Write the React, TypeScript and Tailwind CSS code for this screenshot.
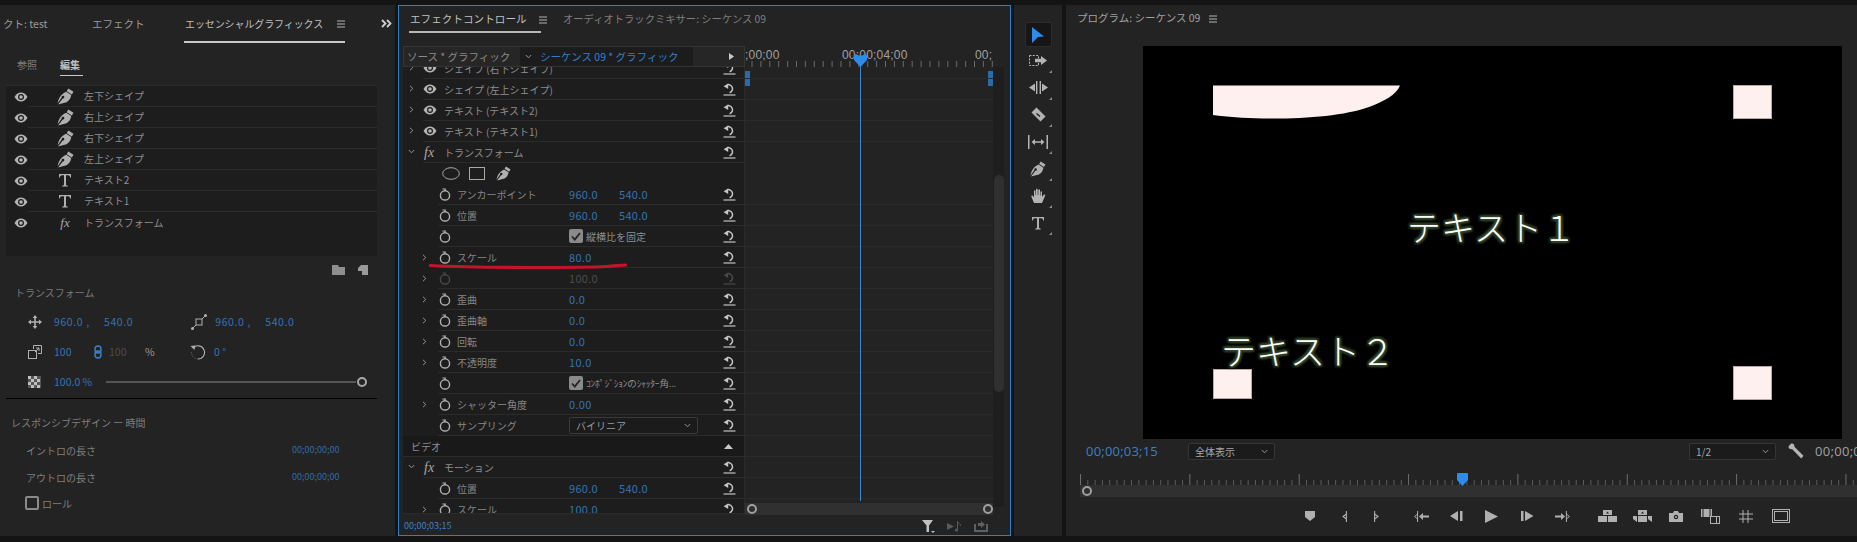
import React from "react";

const FONT = { fontFamily: '"Noto Sans CJK JP", "Noto Sans", sans-serif' };

function Eye({ c = "#b4b4b4" }: { c?: string }) {
  return (
    <svg width="14" height="10" viewBox="0 0 14 10" className="shrink-0">
      <path d="M0.5 5C2.5 1.8 4.6 0.6 7 0.6S11.5 1.8 13.5 5C11.5 8.2 9.4 9.4 7 9.4S2.5 8.2 0.5 5Z" fill={c} />
      <circle cx="7" cy="5" r="3" fill="#1d1d1d" />
      <circle cx="7" cy="5" r="1.8" fill={c} />
    </svg>
  );
}

function Pen({ size = 16, c = "#b0b0b0" }: { size?: number; c?: string }) {
  return (
    <svg width={size} height={size} viewBox="0 0 16 16" className="shrink-0">
      <path d="M10.6 0.5L15.5 3.6L14 6L9.2 3Z" fill={c} />
      <path d="M8.6 3.6L13.4 6.7C13 9.6 11.5 12 9 13.4L1 15.5L5.4 9.8A1.3 1.3 0 1 0 4.4 9L0.6 14.4C1.2 10.5 3.4 5.8 8.6 3.6Z" fill={c} />
    </svg>
  );
}

function TIcon({ c = "#b0b0b0" }: { c?: string }) {
  return (
    <svg width="14" height="14" viewBox="0 0 14 14" className="shrink-0">
      <path d="M1 1H13V4.4H12.2C12 3 11.4 2.2 10 2.2H8V11.6C8 12.4 8.6 12.7 9.8 12.7V13.5H4.2V12.7C5.4 12.7 6 12.4 6 11.6V2.2H4C2.6 2.2 2 3 1.8 4.4H1Z" fill={c} />
    </svg>
  );
}

function Fx({ c = "#a8a8a8", size = 13 }: { c?: string; size?: number }) {
  return (
    <span className="italic leading-none" style={{ color: c, fontSize: size, fontFamily: '"Liberation Serif", serif' }}>
      fx
    </span>
  );
}

function Stopwatch({ c = "#b0b0b0" }: { c?: string }) {
  return (
    <svg width="12" height="13" viewBox="0 0 12 13" className="shrink-0" fill="none">
      <circle cx="6" cy="7.4" r="4.6" stroke={c} strokeWidth="1.4" />
      <path d="M3.4 1H7M6 3L6 1.2" stroke={c} strokeWidth="1.2" />
    </svg>
  );
}

function Reset({ c = "#c4c4c4" }: { c?: string }) {
  return (
    <svg width="13" height="13" viewBox="0 0 13 13" className="shrink-0" fill="none">
      <path d="M4 1.8A4.2 4.2 0 1 1 6.6 9.8" stroke={c} strokeWidth="1.5" />
      <path d="M5.2 0.4V6L0.6 3.2Z" fill={c} />
      <path d="M0.5 12H12.5" stroke={c} strokeWidth="1.2" />
    </svg>
  );
}

function Chevron({ down = false }: { down?: boolean }) {
  return (
    <svg width="7" height="7" viewBox="0 0 7 7" fill="none" className="shrink-0">
      <path d={down ? "M0.8 2L3.5 4.8L6.2 2" : "M2 0.8L4.8 3.5L2 6.2"} stroke="#a0a0a0" strokeWidth="0.9" />
    </svg>
  );
}

function Burger() {
  return (
    <svg width="8" height="8" viewBox="0 0 8 8" className="shrink-0">
      <path d="M0 1H8M0 4H8M0 7H8" stroke="#b4b4b4" strokeWidth="1" />
    </svg>
  );
}

const layers = [
  ["pen", "左下シェイプ"],
  ["pen", "右上シェイプ"],
  ["pen", "右下シェイプ"],
  ["pen", "左上シェイプ"],
  ["t", "テキスト2"],
  ["t", "テキスト1"],
  ["fx", "トランスフォーム"],
];

function LeftPanel() {
  return (
    <div className="w-[395px] h-full bg-[#232323] shrink-0 flex flex-col text-[10px] text-[#9a9a9a]">
      <div className="h-[38px] flex items-start pt-[11px] text-[10.5px] leading-[16px] relative">
        <span className="ml-[3px] w-[89px]">クト: test</span>
        <span className="w-[92px]">エフェクト</span>
        <div className="w-[161px] h-[27px] border-b-2 border-[#c8c8c8] flex items-start pl-[1px] gap-[14px] text-[#c0c0c0] whitespace-nowrap tracking-[-0.1px]">
          <span className="text-[10px]">エッセンシャルグラフィックス</span>
          <span className="pt-[4px]"><Burger /></span>
        </div>
        <svg width="11" height="9" viewBox="0 0 11 9" className="ml-[36px] mt-[3px]" fill="none">
          <path d="M1 1L4.5 4.5L1 8M6 1L9.5 4.5L6 8" stroke="#d0d0d0" strokeWidth="1.8" />
        </svg>
      </div>
      <div className="h-[42px] flex items-start pt-[14px] pl-[17px] gap-[23px]">
        <span className="text-[#808080]">参照</span>
        <span className="h-[19px] w-[23px] border-b border-[#c8c8c8] text-[#c0c0c0] font-bold">編集</span>
      </div>
      <div className="mx-[6px] w-[371px] h-[171px] bg-[#1d1d1d] border-t border-[#2b2b2b]">
        {layers.map(([k, t], i) => (
          <div key={t} className="h-[21px] flex items-center">
            <div className="w-[22px] flex justify-end shrink-0">
              <Eye />
            </div>
            <div className={`flex-1 h-full flex items-center ${i < 6 ? "border-b border-[#2b2b2b]" : ""}`}>
              <div className="w-[40px] flex justify-center shrink-0 ml-[17px]">
                {k === "pen" ? <Pen size={17} /> : k === "t" ? <TIcon /> : <Fx />}
              </div>
              <span className="text-[#8e8e8e] ml-[-1px] -mt-[1px]">{t}</span>
            </div>
          </div>
        ))}
      </div>
      <div className="h-[22px] flex items-center justify-end pr-[26px] gap-[13px] w-[394px] pt-[6px]">
        <svg width="13" height="10" viewBox="0 0 13 10"><path d="M0 0H6L7 2H13V10H0Z" fill="#8e8e8e" /></svg>
        <svg width="10" height="10" viewBox="0 0 10 10"><path d="M3 0H10V10H4V6H0V3Z" fill="#9a9a9a" /></svg>
      </div>
      <div className="pl-[15px] mt-[7px] text-[#7a7a7a] leading-[16px]">トランスフォーム</div>
      <div className="h-[92px] text-[10.5px] text-[#3573b3]">
        <div className="flex items-center h-[30px] mt-[6px]">
          <svg width="14" height="14" viewBox="0 0 14 14" className="ml-[28px]"><path d="M7 0L9.4 3H7.8V6.2H11V4.6L14 7L11 9.4V7.8H7.8V11H9.4L7 14L4.6 11H6.2V7.8H3V9.4L0 7L3 4.6V6.2H6.2V3H4.6Z" fill="#b0b0b0" /></svg>
          <span className="ml-[12px] w-[50px] tracking-[0.6px]">960.0 ,</span>
          <span className="tracking-[0.6px]">540.0</span>
          <svg width="16" height="16" viewBox="0 0 16 16" className="ml-[58px]" fill="none"><rect x="5" y="5" width="6" height="6" stroke="#b0b0b0" /><path d="M2 14L5 11M11 5L14 2" stroke="#b0b0b0" /><circle cx="1.5" cy="14.5" r="1.5" fill="#b0b0b0" /><circle cx="14.5" cy="1.5" r="1.5" fill="#b0b0b0" /></svg>
          <span className="ml-[8px] w-[50px] tracking-[0.6px]">960.0 ,</span>
          <span className="tracking-[0.6px]">540.0</span>
        </div>
        <div className="flex items-center h-[30px]">
          <svg width="14" height="14" viewBox="0 0 14 14" className="ml-[28px]" fill="none"><rect x="0.5" y="5.5" width="8" height="8" stroke="#b0b0b0" /><path d="M5.5 4V0.5H13.5V8.5H10M7 7L11 3M8 3H11V6" stroke="#b0b0b0" /></svg>
          <span className="ml-[12px] w-[40px]">100</span>
          <svg width="8" height="14" viewBox="0 0 8 14" fill="none"><rect x="1" y="1" width="6" height="7" rx="3" stroke="#3d82c8" strokeWidth="1.4" /><rect x="1" y="6" width="6" height="7" rx="3" stroke="#3d82c8" strokeWidth="1.4" /></svg>
          <span className="ml-[7px] w-[36px] text-[#4c4c4c]">100</span>
          <span className="text-[#9a9a9a] w-[45px]">%</span>
          <svg width="16" height="16" viewBox="0 0 16 16" fill="none"><path d="M3 4A6.6 6.6 0 1 1 8 15" stroke="#b0b0b0" strokeWidth="1.1" /><path d="M8 15A6.6 6.6 0 0 1 1.6 8" stroke="#8a8a8a" strokeWidth="0.8" strokeDasharray="1 1.4" /><path d="M0.5 2L5.5 1.6L4.4 6Z" fill="#b0b0b0" /></svg>
          <span className="ml-[8px]">0 °</span>
        </div>
        <div className="flex items-center h-[30px]">
          <svg width="13" height="12" viewBox="0 0 13 12" className="ml-[28px]">
            <rect width="13" height="12" fill="#555" />
            <path d="M0 0h3v3H0zM6 0h3v3H6zM3 3h3v3H3zM9 3h3v3H9zM0 6h3v3H0zM6 6h3v3H6zM3 9h3v3H3zM9 9h3v3H9z" fill="#c0c0c0" />
          </svg>
          <span className="ml-[13px] w-[52px] whitespace-nowrap">100.0 %</span>
          <div className="w-[250px] h-[2px] bg-[#555555]" />
          <div className="w-[10px] h-[10px] rounded-full border-2 border-[#a8a8a8] ml-[1px]" />
        </div>
      </div>
      <div className="mx-[6px] w-[371px] h-px bg-black mt-[5px] shrink-0" />
      <div className="pl-[11px] mt-[16px] leading-[16px] text-[#7f7f7f]">レスポンシブデザイン ー 時間</div>
      <div className="flex items-center pl-[26px] h-[16px] mt-[11px] text-[#7f7f7f]">
        <span className="w-[266px]">イントロの長さ</span>
        <span className="text-[9px] text-[#2f6cab]">00;00;00;00</span>
      </div>
      <div className="flex items-center pl-[26px] h-[16px] mt-[11px] text-[#7f7f7f]">
        <span className="w-[266px]">アウトロの長さ</span>
        <span className="text-[9px] text-[#2f6cab]">00;00;00;00</span>
      </div>
      <div className="flex items-center pl-[25px] h-[16px] mt-[10px] text-[#7f7f7f]">
        <span className="w-[14px] h-[14px] rounded-[2px] border-2 border-[#8a8a8a] mr-[3px]" />
        ロール
      </div>
    </div>
  );
}

type RowT = {
  kind?: "top" | "prop" | "fx" | "icons" | "video";
  label?: string;
  chev?: boolean;
  v1?: string;
  v2?: string;
  dim?: boolean;
  check?: string;
  small?: boolean;
  select?: boolean;
};

const rows: RowT[] = [
  { kind: "top", label: "シェイプ (右下シェイプ)" },
  { kind: "top", label: "シェイプ (左上シェイプ)" },
  { kind: "top", label: "テキスト (テキスト2)" },
  { kind: "top", label: "テキスト (テキスト1)" },
  { kind: "fx", label: "トランスフォーム" },
  { kind: "icons" },
  { label: "アンカーポイント", v1: "960.0", v2: "540.0" },
  { label: "位置", v1: "960.0", v2: "540.0" },
  { check: "縦横比を固定" },
  { label: "スケール", chev: true, v1: "80.0" },
  { chev: true, v1: "100.0", dim: true },
  { label: "歪曲", chev: true, v1: "0.0" },
  { label: "歪曲軸", chev: true, v1: "0.0" },
  { label: "回転", chev: true, v1: "0.0" },
  { label: "不透明度", chev: true, v1: "10.0" },
  { check: "ｺﾝﾎﾟｼﾞｼｮﾝのｼｬｯﾀｰ角...", small: true },
  { label: "シャッター角度", chev: true, v1: "0.00" },
  { label: "サンプリング", select: true },
  { kind: "video", label: "ビデオ" },
  { kind: "fx", label: "モーション" },
  { label: "位置", v1: "960.0", v2: "540.0" },
  { label: "スケール", chev: true, v1: "100.0" },
];

function EffectRow({ r }: { r: RowT }) {
  if (r.kind === "video") {
    return (
      <div className="h-[21px] bg-[#191919] flex items-center pl-[8px] pr-[5px] text-[#8e8e8e] border-b border-[#2b2b2b]">
        <span className="flex-1">{r.label}</span>
        <svg width="9" height="5" viewBox="0 0 9 5"><path d="M4.5 0L9 5H0Z" fill="#c8c8c8" /></svg>
        <span className="w-[6px]" />
      </div>
    );
  }
  if (r.kind === "top" || r.kind === "fx") {
    return (
      <div className="h-[21px] flex items-center">
        <div className="w-[20px] shrink-0 flex pl-[5px] -mt-[2px]"><Chevron down={r.kind === "fx"} /></div>
        <div className="flex-1 h-full flex items-center border-b border-[#2b2b2b] pr-[8px]">
          <div className="w-[21px] flex justify-start shrink-0">
            {r.kind === "top" ? <Eye /> : <span className="ml-[1px]"><Fx size={14} /></span>}
          </div>
          <span className="flex-1 text-[#8e8e8e] whitespace-nowrap">{r.label}</span>
          <Reset />
        </div>
      </div>
    );
  }
  if (r.kind === "icons") {
    return (
      <div className="h-[21px] flex items-center pl-[39px]">
        <svg width="18" height="13" viewBox="0 0 18 13" fill="none"><ellipse cx="9" cy="6.5" rx="8.3" ry="5.8" stroke="#a8a8a8" /></svg>
        <svg width="16" height="13" viewBox="0 0 16 13" fill="none" className="ml-[9px]"><rect x="0.5" y="0.5" width="15" height="12" stroke="#a8a8a8" /></svg>
        <span className="ml-[11px]"><Pen size={15} /></span>
      </div>
    );
  }
  return (
    <div className="h-[21px] flex items-center">
      <div className="w-[25px] shrink-0 flex justify-end">{r.chev && <Chevron />}</div>
      <div className="ml-[10px] flex-1 h-full flex items-center border-b border-[#2b2b2b] pr-[8px]">
        <div className="w-[19px] shrink-0 pl-[1px]"><Stopwatch c={r.dim ? "#4a4a4a" : "#b0b0b0"} /></div>
        <span className="w-[112px] shrink-0 text-[#868686] whitespace-nowrap">{r.label}</span>
        {r.check ? (
          <div className="flex items-center flex-1 min-w-0 text-[#8e8e8e] whitespace-nowrap">
            <span className="w-[14px] h-[14px] bg-[#8a8a8a] rounded-[2px] flex items-center justify-center mr-[3px] shrink-0">
              <svg width="10" height="9" viewBox="0 0 10 9" fill="none"><path d="M1 4.5L3.8 7.5L9 1" stroke="#232323" strokeWidth="1.8" /></svg>
            </span>
            <span className={r.small ? "text-[9.5px] tracking-[-0.2px]" : ""}>{r.check}</span>
          </div>
        ) : r.select ? (
          <div className="flex items-center flex-1">
            <div className="w-[129px] h-[17px] border border-[#3a3a3a] rounded-[2px] bg-[#1b1b1b] flex items-center justify-between px-[6px] text-[#9a9a9a]">
              <span>バイリニア</span>
              <Chevron down />
            </div>
          </div>
        ) : (
          <div className={`flex flex-1 text-[11px] tracking-[0.3px] ${r.dim ? "text-[#4c4c4c]" : "text-[#3573b3]"}`}>
            <span className="w-[50px]">{r.v1}</span>
            <span>{r.v2}</span>
          </div>
        )}
        <Reset c={r.dim ? "#4a4a4a" : "#c4c4c4"} />
      </div>
    </div>
  );
}

function MidPanel() {
  return (
    <div className="w-[613px] h-full shrink-0 border border-[#2f7fc4] bg-[#232323] flex flex-col text-[10px] relative">
      <div className="h-[27px] flex items-start pt-[3px] pl-[10px] relative shrink-0 text-[10.5px]">
        <div className="w-[132px] h-[24px] border-b-2 border-[#b8b8b8] flex items-start text-[#c0c0c0] whitespace-nowrap pl-[1px] gap-[12px] leading-[20px]">
          <span className="text-[10.5px] tracking-[0.1px]">エフェクトコントロール</span>
          <span className="pt-[7px]"><Burger /></span>
        </div>
        <span className="ml-[22px] text-[#7e7e7e] leading-[20px] text-[10.3px]">オーディオトラックミキサー: シーケンス 09</span>
      </div>
      <div className="flex flex-1 min-h-0 mt-[-1px]">
        <div className="pl-[4px] w-[346px] shrink-0 flex flex-col">
          <div className="mt-[14px] h-[21px] w-[342px] flex items-center bg-[#262626] border border-[#343434] z-10 whitespace-nowrap shrink-0">
            <span className="w-[116px] pl-[3px] text-[#8a8a8a] text-[10.5px]">ソース * グラフィック</span>
            <div className="w-[173px] h-full bg-[#1c1c1c] flex items-center pl-[5px] gap-[8px]">
              <Chevron down />
              <span className="text-[#2f80d0] text-[10.5px]">シーケンス 09 * グラフィック</span>
            </div>
            <svg width="5" height="7" viewBox="0 0 5 7" className="ml-[36px]"><path d="M0 0L5 3.5L0 7Z" fill="#c8c8c8" /></svg>
          </div>
          <div className="h-[447px] overflow-hidden bg-[#1d1d1d] border-r border-[#2b2b2b] border-b w-[342px]">
            <div className="-mt-[9px]">
              {rows.map((r, i) => (
                <EffectRow key={i} r={r} />
              ))}
            </div>
          </div>
          <div className="pt-[5px] pl-[1px] text-[9px] text-[#3d82c8] leading-[14px]">00;00;03;15</div>
        </div>
        <TimelineSide />
      </div>
      <svg width="198" height="8" viewBox="0 0 198 8" className="absolute left-[30px] top-[256px] z-20" fill="none">
        <path d="M1 3.5C30 5 60 5.5 100 5.5C130 5.5 160 5.5 178 4.5C186 4 192 3 196.5 3" stroke="#c4142c" strokeWidth="3.2" strokeLinecap="round" />
      </svg>
    </div>
  );
}

function TimelineSide() {
  const lineRows = [78, 99, 120, 141, 204, 225, 246, 267, 288, 309, 330, 351, 372, 393, 414, 435, 456, 477, 498];
  return (
    <div className="flex-1 min-w-0 flex flex-col relative">
      <div className="h-[35px] relative text-[12px] text-[#a0a0a0] shrink-0 tracking-[0.2px]" style={{ fontFamily: '"Liberation Sans", sans-serif' }}>
        <span className="absolute left-[0px] top-[15px] leading-[16px]">;00;00</span>
        <span className="absolute left-[97px] top-[15px] leading-[16px]">00;00;04;00</span>
        <span className="absolute left-[230px] top-[15px] leading-[16px]">00;</span>
        <svg width="248" height="6" className="absolute left-0 bottom-0">
          {Array.from({ length: 28 }).map((_, i) => (
            <line key={i} x1={7 + i * 8.9} x2={7 + i * 8.9} y1="0" y2="6" stroke="#6a6a6a" />
          ))}
        </svg>
      </div>
      <div className="flex flex-1 min-h-0">
        <div className="w-[248px] relative">
          {lineRows.map((y) => (
            <div key={y} className="absolute left-0 right-0 h-px bg-[#2b2b2b]" style={{ top: y - 67 }} />
          ))}
          <div className="absolute left-0 top-[4px] w-[5px] h-[7px] bg-[#2c6ba8]" />
          <div className="absolute left-0 top-[12px] w-[5px] h-[7px] bg-[#2c6ba8]" />
          <div className="absolute right-0 top-[4px] w-[5px] h-[7px] bg-[#2c6ba8]" />
          <div className="absolute right-0 top-[12px] w-[5px] h-[7px] bg-[#2c6ba8]" />
          <div className="absolute bottom-[20px] left-0 right-0 h-[12px] bg-[#303030] flex items-center justify-between pl-[2px] pr-0">
            <div className="w-[10px] h-[10px] rounded-full border-2 border-[#a0a0a0]" />
            <div className="w-[10px] h-[10px] rounded-full border-2 border-[#a0a0a0]" />
          </div>
          <div className="absolute bottom-[-1px] right-[5px] flex items-center gap-[12px] h-[20px]">
            <svg width="13" height="14" viewBox="0 0 13 14"><path d="M0 1H11L7 6.5V13H4.5V6.5Z" fill="#c0c0c0" /><path d="M9 12H13L11 14Z" fill="#c0c0c0" /></svg>
            <svg width="15" height="11" viewBox="0 0 15 11"><path d="M0 2L7 5.5L0 9Z" fill="#5a5a5a" /><path d="M10.5 0.5V8.5M10.5 0.5C11.5 2.5 14 3 13.5 5" stroke="#5a5a5a" fill="none" /><circle cx="9.5" cy="9" r="1.6" fill="#5a5a5a" /></svg>
            <svg width="14" height="11" viewBox="0 0 14 11" fill="#5f5f5f"><path d="M0 3H2V9H12V3H14V11H0ZM4 2H7V0L11 3.5L7 7V5H4Z" /></svg>
          </div>
          <div className="absolute left-[115px] top-[-12px] w-px h-[446px] bg-[#3d88cc]" />
          <svg width="13" height="13" viewBox="0 0 13 13" className="absolute left-[109px] top-[-13px]"><path d="M0 2Q0 0 2 0L5 1.5H8L11 0Q13 0 13 2V6L6.5 13L0 6Z" fill="#2d8ceb" /></svg>
        </div>
        <div className="w-[11px] h-[440px] bg-[#1e1e1e] relative">
          <div className="absolute left-[1px] right-0 top-[108px] h-[217px] bg-[#303030] rounded-[5px]" />
        </div>
      </div>
    </div>
  );
}

function ToolsPanel() {
  const c = "#b4b4b4";
  const Corner = () => <svg width="3" height="3" viewBox="0 0 3 3" className="absolute right-0 bottom-[1px]"><path d="M3 0V3H0Z" fill="#8a8a8a" /></svg>;
  const tools = [
    <svg key="a" width="18" height="11" viewBox="0 0 18 11" fill="none"><rect x="0.5" y="0.5" width="9" height="10" stroke={c} strokeDasharray="2 1.3" /><path d="M6 3.8H12V1L18 5.5L12 10V7.2H6Z" fill={c} /></svg>,
    <svg key="b" width="19" height="13" viewBox="0 0 19 13"><path d="M0 6.5L6 2.5V10.5ZM19 6.5L13 2.5V10.5Z" fill={c} /><rect x="7" y="0" width="1.4" height="13" fill={c} /><rect x="10.6" y="0" width="1.4" height="13" fill={c} /></svg>,
    <svg key="c" width="15" height="15" viewBox="0 0 15 15"><path d="M5.5 0.5L14.5 9.5L9.5 14.5L0.5 5.5Z" fill={c} /><path d="M5.5 6.5L9 9.5" stroke="#232323" strokeWidth="1.6" /></svg>,
    <svg key="d" width="20" height="14" viewBox="0 0 20 14"><rect x="0" y="0" width="1.5" height="14" fill={c} /><rect x="18.5" y="0" width="1.5" height="14" fill={c} /><path d="M3.5 7L7 4V6.3H13V4L16.5 7L13 10V7.7H7V10Z" fill={c} /></svg>,
    <Pen key="e" size={16} />,
    <svg key="f" width="15" height="16" viewBox="0 0 15 16"><path d="M3 15L0.5 9C0 7.6 1 7 2 8L3 9.5V3C3 2 4.4 2 4.5 3V7H5V1.5C5 0.5 6.6 0.5 6.7 1.5V7H7.3V2C7.3 1 8.9 1 9 2V7.5H9.5V4C9.5 3 11 3 11 4V9L12.6 7C13.4 6 14.8 6.8 14 8L11 15Z" fill={c} /></svg>,
    <TIcon key="g" />,
  ];
  return (
    <div className="w-[48px] h-full shrink-0 bg-[#232323] flex flex-col items-center pt-[17px]">
      <div className="w-[27px] h-[25px] bg-[#161616] border border-[#2c2c2c] rounded-[2px] flex items-center justify-center">
        <svg width="12" height="16" viewBox="0 0 12 16"><path d="M0 0L12 9.5L6 10L0 16Z" fill="#2d8ceb" /></svg>
      </div>
      {tools.map((t, i) => (
        <div key={i} className="h-[27px] w-[27px] relative flex items-center justify-center">
          {t}
          <Corner />
        </div>
      ))}
    </div>
  );
}

function Ruler() {
  const ticks: React.ReactNode[] = [];
  for (let i = 0; i < 108; i++) {
    const x = 0.5 + i * 7.29;
    const major = i % 15 === 0;
    ticks.push(<line key={i} x1={x} x2={x} y1={major ? 0 : 6} y2="11" stroke={major ? "#6e6e6e" : "#5c5c5c"} />);
  }
  return (
    <svg width="777" height="11" className="block">
      {ticks}
    </svg>
  );
}

function Dropdown({ label, w }: { label: string; w: string }) {
  return (
    <div className={`${w} shrink-0 h-[17px] bg-[#1b1b1b] border border-[#353535] rounded-[2px] flex items-center justify-between pl-[6px] pr-[6px] text-[10px] text-[#a8a8a8]`}>
      <span>{label}</span>
      <Chevron down />
    </div>
  );
}

function Transport() {
  const c = "#b0b0b0";
  return (
    <div className="flex items-center h-[24px] pl-[239px]">
      <svg width="10" height="10" viewBox="0 0 10 10"><path d="M0 0H10V6L5 10L0 6Z" fill={c} /></svg>
      <svg width="5" height="11" viewBox="0 0 5 11" className="ml-[27px]" fill="none"><path d="M4.4 0V11M4.4 3L1 5.5L4.4 8" stroke={c} strokeWidth="1.1" /></svg>
      <svg width="5" height="11" viewBox="0 0 5 11" className="ml-[27px]" fill="none"><path d="M0.6 0V11M0.6 3L4 5.5L0.6 8" stroke={c} strokeWidth="1.1" /></svg>
      <svg width="15" height="11" viewBox="0 0 15 11" className="ml-[35px]" fill="none"><path d="M3.6 0V11M3.6 3L0.6 5.5L3.6 8" stroke={c} strokeWidth="1" /><path d="M5 5.5L9 2V4.5H15V6.5H9V9Z" fill={c} /></svg>
      <svg width="14" height="10" viewBox="0 0 14 10" className="ml-[20px]"><path d="M9 0V10L1 5Z" fill={c} /><rect x="11" y="0" width="2.5" height="10" fill={c} /></svg>
      <svg width="13" height="13" viewBox="0 0 13 13" className="ml-[22px]"><path d="M0 0L13 6.5L0 13Z" fill={c} /></svg>
      <svg width="13" height="10" viewBox="0 0 13 10" className="ml-[23px]"><rect x="0" y="0" width="2.5" height="10" fill={c} /><path d="M4 0L12.5 5L4 10Z" fill={c} /></svg>
      <svg width="15" height="11" viewBox="0 0 15 11" className="ml-[21px]" fill="none"><path d="M11.4 0V11M11.4 3L14.4 5.5L11.4 8" stroke={c} strokeWidth="1" /><path d="M10 5.5L6 2V4.5H0V6.5H6V9Z" fill={c} /></svg>
      <svg width="19" height="12" viewBox="0 0 19 12" className="ml-[28px]"><path d="M5 0H14V5H5ZM0 6H9V12H0ZM10 6H19V12H10Z" fill={c} /><path d="M8 3.6L9.5 1.6L11 3.6Z" fill="#232323" /></svg>
      <svg width="19" height="12" viewBox="0 0 19 12" className="ml-[16px]"><path d="M5 0H14V5H5ZM5 6H14V12H5ZM0 6H4V12L0 9ZM15 6H19V12L15 9Z" fill={c} /><path d="M8 3.6L9.5 1.6L11 3.6Z" fill="#232323" /></svg>
      <svg width="14" height="11" viewBox="0 0 14 11" className="ml-[17px]"><path d="M0 2H4L5 0H9L10 2H14V11H0Z" fill={c} /><circle cx="7" cy="6" r="2.2" fill="#232323" /><circle cx="7" cy="6" r="1" fill={c} /></svg>
      <svg width="19" height="15" viewBox="0 0 19 15" className="ml-[18px]" fill="none"><rect x="0" y="0" width="11" height="8" fill={c} /><path d="M2 0V8M9 0V8" stroke="#232323" /><rect x="9.5" y="7.5" width="9" height="7" stroke={c} /><path d="M15.5 8V14" stroke={c} /></svg>
      <svg width="14" height="13" viewBox="0 0 14 13" className="ml-[19px]" fill="none"><path d="M4 0V13M9 0V13M0 4H14M0 9H14" stroke={c} strokeWidth="1" /></svg>
      <svg width="18" height="14" viewBox="0 0 18 14" className="ml-[19px]" fill="none"><rect x="0.5" y="0.5" width="17" height="13" stroke={c} /><rect x="2.5" y="2.5" width="13" height="9" stroke={c} /></svg>
    </div>
  );
}

function Video() {
  const glow = "1px 1px 1px #34472a, -1px -1px 1px #34472a, 2px 0 2px #2c3c24, -2px 0 2px #2c3c24, 0 2px 2px #2c3c24, 0 -2px 2px #2c3c24, 2px 2px 2px #22301c, -2px -2px 2px #22301c, 2px -2px 2px #22301c, -2px 2px 2px #22301c";
  const square = "absolute bg-[#fff0f0] border border-[#b8a8a8]";
  return (
    <div className="ml-[77px] w-[699px] h-[393px] bg-black relative overflow-hidden shrink-0">
      <svg width="188" height="35" viewBox="0 0 188 35" className="absolute left-[70px] top-[39px]">
        <path d="M0 0.5H187C184 9 172 16 156 22C130 31 92 34 50 33.5C30 33 14 32 0 30Z" fill="#fff0f0" />
      </svg>
      <div className={`${square} left-[590px] top-[39px] w-[39px] h-[34px]`} />
      <div className={`${square} left-[590px] top-[320px] w-[39px] h-[34px]`} />
      <div className={`${square} left-[70px] top-[323px] w-[39px] h-[30px]`} />
      <span className="absolute left-[264px] top-[159px] text-[34px] leading-[44px] font-light text-white whitespace-nowrap" style={{ textShadow: glow }}>テキスト１</span>
      <span className="absolute left-[78px] top-[282px] text-[35px] leading-[44px] font-light text-white whitespace-nowrap" style={{ textShadow: glow }}>テキスト２</span>
    </div>
  );
}

function RightPanel() {
  return (
    <div className="flex-1 min-w-0 h-full bg-[#232323] flex flex-col overflow-hidden">
      <div className="h-[41px] shrink-0 flex items-start pt-[3px] pl-[11px] gap-[9px] text-[10.5px] text-[#a0a0a0] leading-[20px]">
        <span>プログラム: シーケンス 09</span>
        <span className="pt-[7px]"><Burger /></span>
      </div>
      <Video />
      <div className="h-[35px] shrink-0 flex items-start pt-[4px] pl-[20px] whitespace-nowrap">
        <span className="w-[102px] shrink-0 text-[13px] leading-[17px] font-medium text-[#3a80c8] tracking-[0.2px]" style={{ fontFamily: '"Open Sans", sans-serif' }}>00;00;03;15</span>
        <Dropdown label="全体表示" w="w-[87px]" />
        <span className="w-[414px] shrink-0" />
        <Dropdown label="1/2" w="w-[87px]" />
        <svg width="16" height="16" viewBox="0 0 15 15" className="ml-[12px] shrink-0"><path d="M0.5 3L3 0.5C5 0 6.4 1.6 6 3.6L14.5 12L12.4 14.5L4 5.8C2 6.2 0.2 5 0.5 3Z" fill="#b4b4b4" /></svg>
        <span className="ml-[11px] shrink-0 text-[13px] leading-[17px] text-[#a0a0a0] tracking-[0.3px]" style={{ fontFamily: '"Open Sans", sans-serif' }}>00;00;03;15</span>
      </div>
      <div className="pl-[14px] h-[11px] shrink-0 relative">
        <Ruler />
        <svg width="11" height="13" viewBox="0 0 11 13" className="absolute left-[391px] top-[-1px]"><path d="M0 1Q0 0 1 0H10Q11 0 11 1V7L5.5 13L0 7Z" fill="#2d8ceb" /></svg>
      </div>
      <div className="ml-[14px] h-[12px] shrink-0 bg-[#303030] flex items-center pl-[2px]">
        <div className="w-[10px] h-[10px] rounded-full border-2 border-[#a0a0a0]" />
      </div>
      <div className="pt-[7px]">
        <Transport />
      </div>
    </div>
  );
}

export default function App() {
  return (
    <div className="w-[1857px] h-[542px] bg-[#141414] pt-[5px] pb-[6px] flex overflow-hidden" style={FONT}>
      <LeftPanel />
      <div className="w-[3px] shrink-0" />
      <MidPanel />
      <div className="w-[3px] shrink-0" />
      <ToolsPanel />
      <div className="w-[4px] shrink-0" />
      <RightPanel />
    </div>
  );
}
